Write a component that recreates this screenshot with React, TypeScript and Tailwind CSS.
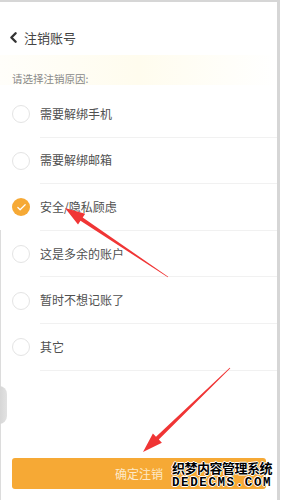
import { ChevronLeft, Check } from "lucide-react";

const reasons = [
  "需要解绑手机",
  "需要解绑邮箱",
  "安全/隐私顾虑",
  "这是多余的账户",
  "暂时不想记账了",
  "其它",
];

// tapering red annotation arrow, tip first
function arrowPoints(tip: [number, number], tail: [number, number]) {
  const dx = tail[0] - tip[0];
  const dy = tail[1] - tip[1];
  const len = Math.hypot(dx, dy);
  const ux = dx / len;
  const uy = dy / len;
  const nx = -uy;
  const ny = ux;
  const head = 20;
  const bx = tip[0] + ux * head;
  const by = tip[1] + uy * head;
  const p = (x: number, y: number) => `${x.toFixed(1)},${y.toFixed(1)}`;
  return [
    p(tip[0], tip[1]),
    p(bx + nx * 6.5, by + ny * 6.5),
    p(bx + nx * 2, by + ny * 2),
    p(tail[0] + nx * 0.4, tail[1] + ny * 0.4),
    p(tail[0] - nx * 0.4, tail[1] - ny * 0.4),
    p(bx - nx * 2, by - ny * 2),
    p(bx - nx * 6.5, by - ny * 6.5),
  ].join(" ");
}

export default function App() {
  const selected = 2;

  return (
    <div
      className="relative w-[281px] h-[500px] overflow-hidden bg-white"
      style={{ fontFamily: '"Noto Sans CJK SC", "Noto Sans", sans-serif' }}
    >
      <div className="relative flex h-full w-[280px] flex-col border-t-2 border-r-[3px] border-[#d6d6d6] bg-white">
        {/* header */}
        <div className="flex h-[36px] items-center gap-[2px] pl-[5px] pt-[35px] pb-[3px]">
          <ChevronLeft className="h-[17px] w-[17px] text-[#333]" strokeWidth={3.4} />
          <span className="text-[13px] leading-none text-[#444]">注销账号</span>
        </div>

        {/* faint highlight */}
        <div className="mt-[15px] h-[30px] bg-gradient-to-r from-[#fffefa] via-[#fffcee] to-[#ffffff] flex items-end pl-[12px]">
          <span className="text-[10.5px] leading-none text-[#8a8a8a] pb-[1px]">请选择注销原因:</span>
        </div>

        <div className="mt-[6px] flex flex-col">
          {reasons.map((r, i) => (
            <div key={r} className="flex h-[46.6px] items-center">
              <div className="flex w-[40px] shrink-0 items-center pl-[12px]">
                {i === selected ? (
                  <div className="flex h-[18px] w-[18px] items-center justify-center rounded-full bg-[#f6a935]">
                    <Check className="h-[11px] w-[11px] text-white" strokeWidth={2.6} />
                  </div>
                ) : (
                  <div className="h-[18px] w-[18px] rounded-full border border-[#e4e4e4]" />
                )}
              </div>
              <div className="flex h-full flex-1 items-center border-b border-[#f1f1f1]">
                <span className="text-[12px] leading-none text-[#505050]">{r}</span>
              </div>
            </div>
          ))}
        </div>

        {/* left edge shadow */}
        <div className="absolute left-0 top-[228px] bottom-0 w-[1px] bg-[#dcdcdc]" />
        <div className="absolute left-[-9px] top-[384px] h-[38px] w-[16px] rounded-full bg-gradient-to-r from-[#c8c8c8] to-[#e2e2e2]" />

        <div className="mt-auto mb-[11px] px-[12px]">
          <div className="flex h-[31px] w-[254px] items-center justify-center rounded-[3px] bg-[#f6a935]">
            <span className="text-[12px] leading-none text-[#fde9c8]">确定注销</span>
          </div>
        </div>
      </div>

      {/* watermark */}
      <div className="absolute left-[172px] top-[461px] flex flex-col items-start">
        <span
          className="text-[13px] font-bold leading-none tracking-[-0.5px] text-black"
          style={{ textShadow: "1px 0 #fff, -1px 0 #fff, 0 1px #fff, 0 -1px #fff" }}
        >
          织梦内容管理系统
        </span>
        <span
          className="mt-[3px] text-[12.5px] font-bold leading-none tracking-[1.6px] text-black"
          style={{
            fontFamily: '"Liberation Mono", monospace',
            textShadow: "1px 0 #fff, -1px 0 #fff, 0 1px #fff, 0 -1px #fff",
          }}
        >
          DEDECMS.COM
        </span>
      </div>

      {/* annotation arrows */}
      <svg className="pointer-events-none absolute inset-0" width="281" height="500">
        <polygon points={arrowPoints([65, 208], [168, 277])} fill="#f03535" />
        <polygon points={arrowPoints([143, 452], [230, 368])} fill="#f03535" />
      </svg>
    </div>
  );
}
